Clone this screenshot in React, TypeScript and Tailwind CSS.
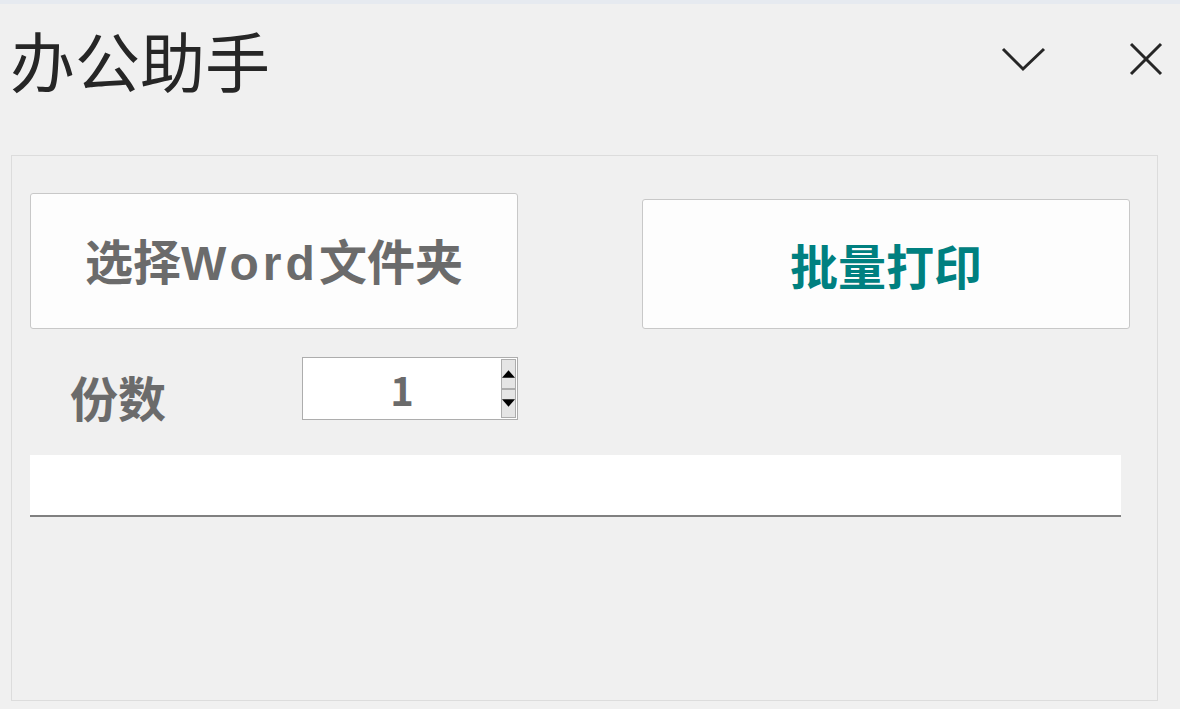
const font = "font-['Microsoft_YaHei','Noto_Sans_CJK_SC',sans-serif]";

function SpinBox({ value }: { value: number }) {
  return (
    <div className="flex w-[216px] h-[63px] border border-[#adadad] bg-white">
      <div className="flex-1 flex items-center justify-center text-[40px] font-bold text-[#6b6b6b] leading-none">
        {value}
      </div>
      <div className="flex flex-col w-[15px] my-[1px] mr-[1px]">
        <button className="flex-1 flex items-center justify-center border border-[#adadad] bg-[#e5e5e5]">
          <svg width="14" height="8" viewBox="0 0 14 8">
            <polygon points="7,0 14,8 0,8" fill="#000" />
          </svg>
        </button>
        <button className="flex-1 flex items-center justify-center border border-[#adadad] bg-[#e5e5e5]">
          <svg width="14" height="8" viewBox="0 0 14 8">
            <polygon points="0,0 14,0 7,8" fill="#000" />
          </svg>
        </button>
      </div>
    </div>
  );
}

export default function App() {
  return (
    <div className={`w-[1180px] h-[709px] bg-[#f0f0f0] flex flex-col ${font}`}>
      <div className="h-[4px] bg-[#e6eaf0]" />
      <header className="flex items-center h-[116px] pl-[10px] pb-[6px]">
        <h1 className="text-[65px] leading-none text-[#262626]">办公助手</h1>
        <div className="ml-auto flex items-center">
          <svg width="46" height="28" viewBox="0 0 46 28" className="mr-[82px]">
            <polyline points="2,4 22,24 43,4" fill="none" stroke="#262626" strokeWidth="3" />
          </svg>
          <svg width="34" height="34" viewBox="0 0 34 34" className="mr-[17px]">
            <line x1="2" y1="2" x2="32" y2="32" stroke="#262626" strokeWidth="3" />
            <line x1="32" y1="2" x2="2" y2="32" stroke="#262626" strokeWidth="3" />
          </svg>
        </div>
      </header>
      <div className="ml-[11px] mt-[35px] w-[1147px] h-[546px] border border-[#dcdcdc] pl-[18px] pr-[27px] pt-[37px] flex flex-col">
        <div className="flex items-end">
          <button className="w-[488px] h-[136px] rounded-[3px] border border-[#c8c8c8] bg-[#fdfdfd] text-[48px] font-bold text-[#6b6b6b] leading-none">
            选择<span className="font-['Liberation_Sans',sans-serif] tracking-[4px]">Word</span>文件夹
          </button>
          <button className="ml-auto w-[488px] h-[130px] rounded-[3px] border border-[#c8c8c8] bg-[#fdfdfd] text-[48px] font-bold text-[#008080] leading-none">
            批量打印
          </button>
        </div>
        <div className="flex items-start mt-[28px]">
          <span className="ml-[40px] mt-[15px] w-[232px] text-[48px] font-bold text-[#6b6b6b] leading-none">份数</span>
          <SpinBox value={1} />
        </div>
        <div className="mt-[35px] w-[1091px] h-[62px] bg-white border-b-2 border-[#808080]" />
      </div>
    </div>
  );
}
